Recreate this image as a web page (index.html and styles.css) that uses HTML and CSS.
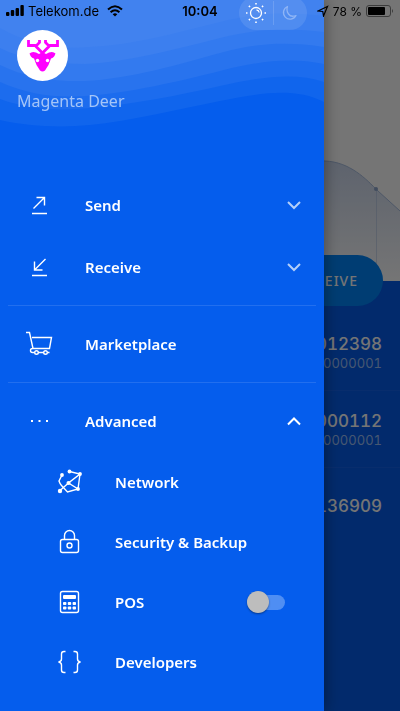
FILE: index.html
```html
<!DOCTYPE html>
<html lang="en">
<head>
<meta charset="utf-8">
<meta name="viewport" content="width=device-width, initial-scale=1">
<title>Menu</title>
<link rel="stylesheet" href="styles.css">
</head>
<body>
<main class="home" aria-hidden="true">
  <div class="chart">
    <svg viewBox="0 0 400 281" preserveAspectRatio="xMaxYMax slice">
      <defs><linearGradient id="fade" x1="0" y1="0" x2="0" y2="1"><stop offset="0" stop-color="#ccd8ee"/><stop offset="1" stop-color="#fff"/></linearGradient></defs>
      <path d="M240 190C280 165 310 160 325 161C350 162 366 179 378 191L400 211V281H240Z" fill="url(#fade)"/>
      <path d="M240 190C280 165 310 160 325 161C350 162 366 179 378 191L400 211" fill="none" stroke="#a9bedf"/>
      <path d="M376.500 189V281" stroke="#a9bedf" stroke-opacity=".5"/>
      <circle cx="376" cy="189" r="2" fill="#8fa6cc"/>
    </svg>
  </div>
  <div class="ledger">
    <button class="receive" type="button" tabindex="-1">RECEIVE</button>
    <ul class="payments">
      <li><strong>0.00012398</strong><span>0.00000001</span></li>
      <li><strong>0.00000112</strong><span>0.00000001</span></li>
      <li><strong>0.00136909</strong></li>
    </ul>
  </div>
</main>
<div class="scrim"></div>

<aside class="drawer">
  <header class="profile">
    <svg class="waves" viewBox="0 0 324 140" preserveAspectRatio="none">
      <rect width="324" height="140" fill="#4182ef"/>
      <path fill="#3c7fef" d="M0 28C28 44 60 50 90 47C135 45 180 32 220 22S290 12 324 16V140H0Z"/>
      <path fill="#337aef" d="M0 48C24 60 55 64 85 64C130 62 180 48 220 38S290 28 324 32V140H0Z"/>
      <path fill="#2873ee" d="M0 65C24 77 55 82 85 81C130 79 180 64 220 53S290 42 324 47V140H0Z"/>
      <path fill="#1c6cee" d="M0 82C30 95 55 98 85 96C130 93 180 81 220 71S290 57 324 64V140H0Z"/>
      <path fill="#1065ed" d="M0 99C30 110 60 111 90 108C130 105 180 95 220 86S295 72 324 82V140H0Z"/>
      <path fill="#055ded" d="M0 120C25 126 60 128 90 125C130 121 180 109 220 101S295 87 324 102V140H0Z"/>
    </svg>
    <div class="identity">
      <svg class="avatar" viewBox="0 0 51 51" role="img" aria-label="Magenta deer avatar">
        <circle cx="25.500" cy="25.500" r="25.500" fill="#fff"/>
        <path d="M11.500 10V15.500H18L25.500 23L33 15.500H40.500V10M22.500 10V12.500L19 16M28.500 10V12.500L32 16" fill="none" stroke="#f0f" stroke-width="2.800"/>
        <path d="M25.500 22L29 24L32 22.500Q36 21 38.500 23.500Q37 28 34 28.500L31.500 35L28 40.500Q25.500 42.500 23 40.500L19.500 35L17 28.500Q14 28 12.500 23.500Q15 21 19 22.500L22 24Z" fill="#f0f"/>
        <circle cx="20.500" cy="30.500" r="1.700" fill="#fff"/><circle cx="30.500" cy="30.500" r="1.700" fill="#fff"/>
      </svg>
      <span class="name">Magenta Deer</span>
    </div>
    <div class="theme">
      <button type="button" aria-label="Light theme">
        <svg width="24" height="24" viewBox="0 0 24 24" fill="none" stroke="#fff"><circle cx="12" cy="12" r="5.500" stroke-width="1.300"/><path d="M12.500 8.800A3.200 3.200 0 0 1 15.200 11.500" stroke-width="1.200"/><path d="M12 2V3.500M12 20.500V22M2 12H3.500M20.500 12H22M4.900 4.900L6 6M18 18L19.100 19.100M4.900 19.100L6 18M18 6L19.100 4.900" stroke-width="1.600"/></svg>
      </button>
      <button class="night" type="button" aria-label="Dark theme">
        <svg width="24" height="24" viewBox="0 0 24 24" fill="none" stroke="#a3c2f7" stroke-opacity=".75" stroke-width="1.300"><path d="M9.500 5.500A6.600 6.600 0 1 0 18 14.500Q13 16.500 10.500 13T9.500 5.500Z" stroke-linejoin="round"/></svg>
      </button>
    </div>
  </header>

  <nav class="menu">
    <button class="row" type="button" aria-expanded="false">
      <svg class="icon" viewBox="0 0 28 28"><path d="M7.500 17.500L18.500 6.500M10.500 6.500H18.500V14.500M6 22.500H21"/></svg>
      <span>Send</span>
      <svg class="chevron" viewBox="0 0 14 14"><path d="M1 4L7 10L13 4"/></svg>
    </button>
    <button class="row" type="button" aria-expanded="false">
      <svg class="icon" viewBox="0 0 28 28"><path d="M19.500 6L8.500 17M8.500 8.500V17H16.500M6 22.500H21"/></svg>
      <span>Receive</span>
      <svg class="chevron" viewBox="0 0 14 14"><path d="M1 4L7 10L13 4"/></svg>
    </button>
    <hr>
    <a class="row" href="#marketplace">
      <svg class="icon" viewBox="0 0 28 28"><path d="M0 2.500H3.500L7 18.500H23.500L25.500 7.500H6M6.500 18.500Q4.500 18.500 4.500 20.500T6.500 22.500H8.500M12 22.500H18M21.500 22.500H23.500"/><circle cx="10.500" cy="22.500" r="1.800"/><circle cx="19.500" cy="22.500" r="1.800"/></svg>
      <span>Marketplace</span>
    </a>
    <hr>
    <button class="row open" type="button" aria-expanded="true">
      <svg class="icon" viewBox="0 0 28 28"><path d="M5 14H7M12.500 14H14.500M20 14H22" stroke-width="1.800"/></svg>
      <span>Advanced</span>
      <svg class="chevron" viewBox="0 0 14 14"><path d="M1 10.500L7 4.500L13 10.500"/></svg>
    </button>
    <div class="sub">
      <a class="row" href="#network">
        <svg class="icon" viewBox="0 0 28 28"><path d="M6 7L3 13Q4 16 5.500 17.500L11.500 24L22 21L12.500 15L24 6L13.500 3.500M24 6L22 21M12.500 15L4 22.500"/><g fill="#fff" stroke="none"><circle cx="6" cy="7" r="1.900"/><circle cx="13.500" cy="3.500" r="1.900"/><circle cx="24" cy="6" r="1.900"/><circle cx="12.500" cy="15" r="2"/><circle cx="22" cy="21" r="1.900"/><circle cx="4" cy="23" r="2.200"/></g></svg>
        <span>Network</span>
      </a>
      <a class="row" href="#security">
        <svg class="icon" viewBox="0 0 28 28"><rect x="4.500" y="11.500" width="18" height="13" rx="2"/><path d="M8.500 11.500V7.500A5 5 0 0 1 18.500 7.500V11.500"/><circle cx="13.500" cy="17.500" r="2.500"/></svg>
        <span>Security &amp; Backup</span>
      </a>
      <label class="row">
        <svg class="icon" viewBox="0 0 28 28"><rect x="4.500" y="3.500" width="18" height="21" rx="2"/><g fill="#fff" stroke="none"><rect x="7" y="7" width="13" height="4" rx="1"/><rect x="7" y="14" width="3.400" height="3" rx=".8"/><rect x="11.800" y="14" width="3.400" height="3" rx=".8"/><rect x="16.600" y="14" width="3.400" height="3" rx=".8"/><rect x="7" y="18.500" width="3.400" height="3" rx=".8"/><rect x="11.800" y="18.500" width="3.400" height="3" rx=".8"/><rect x="16.600" y="18.500" width="3.400" height="3" rx=".8"/></g></svg>
        <span>POS</span>
        <input class="switch" type="checkbox">
      </label>
      <a class="row" href="#developers">
        <svg class="icon" viewBox="0 0 28 28"><path d="M9.500 3.500H8Q5.500 3.500 5.500 6V11Q5.500 13.500 2.500 14Q5.500 14.500 5.500 17V22Q5.500 24.500 8 24.500H9.500M17.500 3.500H19Q21.500 3.500 21.500 6V11Q21.500 13.500 24.500 14Q21.500 14.500 21.500 17V22Q21.500 24.500 19 24.500H17.500"/></svg>
        <span>Developers</span>
      </a>
    </div>
  </nav>
</aside>

<div class="status">
  <div class="carrier">
    <svg width="18" height="12" viewBox="0 0 18 12"><rect y="7" width="3.400" height="4" rx="1"/><rect x="4.800" y="5" width="3.400" height="6" rx="1"/><rect x="9.600" y="3" width="3.400" height="8" rx="1"/><rect x="14.400" width="3.400" height="11" rx="1"/></svg>
    <span>Telekom.de</span>
    <svg class="wifi" width="16" height="12" viewBox="0 0 16 12" fill="none" stroke="#000" stroke-width="2"><path d="M1 4.500Q8-2 15 4.500M3.600 7.300Q8 3.300 12.400 7.300"/><path d="M8 11.500L5.700 9.200Q8 7.200 10.300 9.200Z" fill="#000" stroke="none"/></svg>
  </div>
  <time>10:04</time>
  <div class="power">
    <svg width="12" height="12" viewBox="0 0 12 12" fill="none" stroke="#000" stroke-width="1.200"><path d="M1 6L10.500 1.500L6.500 11L5.800 6.500Z"/></svg>
    <span>78 %</span>
    <svg width="28" height="12" viewBox="0 0 28 12"><rect x=".5" y=".5" width="24" height="11" rx="2.500" fill="none" stroke="#3c3c3c"/><rect x="2" y="2" width="17" height="8" rx="1"/><path d="M26 4Q28 6 26 8Z" fill="#3c3c3c"/></svg>
  </div>
</div>
</body>
</html>
```
FILE: styles.css
```css
* { box-sizing: border-box; }

body {
  margin: 0;
  min-height: 100vh;
  overflow: hidden;
  background: #055deb;
  color: #fff;
  font-family: "Noto Sans", "Open Sans", sans-serif;
}

button {
  padding: 0;
  border: 0;
  background: none;
  color: inherit;
  font: inherit;
}

.home {
  display: flex;
  flex-direction: column;
  min-height: 100vh;
}

.chart { background: #fff; }

.chart svg {
  display: block;
  width: 100%;
  height: 281px;
}

.ledger {
  flex: 1;
  display: flex;
  flex-direction: column;
  background: #055deb;
}

.receive {
  align-self: flex-end;
  width: 168px;
  height: 51px;
  margin: -26px 17px 8px 0;
  padding-right: 25px;
  border-radius: 26px;
  background: #0085fb;
  font-size: 14px;
  font-weight: 500;
  letter-spacing: 1px;
  text-align: right;
}

.payments {
  margin: 0;
  padding: 0;
  list-style: none;
  font-family: Inter, Roboto, sans-serif;
  font-variant-numeric: tabular-nums;
}

.payments li {
  display: flex;
  flex-direction: column;
  justify-content: center;
  height: 77px;
  padding-right: 18px;
  border-bottom: 1px solid #1362ed;
  text-align: right;
}

.payments li:last-child { border: 0; }

.payments strong {
  font-size: 17px;
  font-weight: 500;
  line-height: 21px;
}

.payments span {
  color: #9bbef7;
  font-size: 13px;
  line-height: 16px;
}

.scrim {
  position: fixed;
  inset: 0;
  background: rgba(0, 0, 0, 0.54);
}

.drawer {
  position: fixed;
  inset: 0 auto 0 0;
  width: 81%;
  overflow: hidden;
  background: #055ded;
  box-shadow: 0 0 16px rgba(0, 0, 0, 0.4);
}

.profile {
  position: relative;
  display: flex;
  justify-content: space-between;
  align-items: flex-start;
  height: 174px;
  padding: 0 17px;
}

.waves {
  position: absolute;
  inset: 0 0 auto 0;
  width: 100%;
  height: 140px;
}

.identity {
  position: relative;
  display: flex;
  flex-direction: column;
  gap: 8px;
  padding-top: 30px;
}

.avatar {
  width: 51px;
  height: 51px;
}

.name {
  color: #a4c5f8;
  font-size: 16px;
  line-height: 24px;
}

.theme {
  position: relative;
  display: flex;
  align-items: center;
  width: 68px;
  height: 34px;
  margin-top: -4px;
  border-radius: 17px;
  background: rgba(255, 255, 255, 0.1);
}

.theme button {
  flex: 1;
  display: flex;
  justify-content: center;
}

.theme .night { border-left: 1px solid rgba(255, 255, 255, 0.15); }

.row {
  display: flex;
  align-items: center;
  width: 100%;
  height: 62px;
  padding: 0 23px 0 26px;
  color: #fff;
  font-size: 15px;
  font-weight: 600;
  line-height: 20px;
  text-align: left;
  text-decoration: none;
}

.row span { flex: 1; }

.icon {
  width: 28px;
  height: 28px;
  margin-right: 31px;
  fill: none;
  stroke: #fff;
  stroke-width: 1.4;
}

.chevron {
  width: 14px;
  height: 14px;
  fill: none;
  stroke: #b4cff9;
  stroke-width: 2;
}

.open .chevron { stroke: #fff; }

hr {
  height: 1px;
  margin: 7px 8px;
  border: 0;
  background: #226fef;
}

.sub .row {
  height: 60px;
  padding: 0 39px 0 56px;
}

.switch {
  appearance: none;
  display: flex;
  align-items: center;
  width: 38px;
  height: 15px;
  margin: 0;
  border-radius: 8px;
  background: #4f8ef3;
}

.switch::before {
  content: "";
  width: 22px;
  height: 22px;
  flex: none;
  border-radius: 50%;
  background: #bdbdbd;
  box-shadow: 0 1px 2px rgba(0, 0, 0, 0.4);
}

.status {
  position: fixed;
  inset: 0 0 auto 0;
  display: grid;
  grid-template-columns: 1fr auto 1fr;
  align-items: center;
  height: 22px;
  padding: 0 6px;
  color: #000;
  font-family: Inter, Roboto, sans-serif;
  font-size: 12px;
}

.carrier,
.power {
  display: flex;
  align-items: center;
  gap: 4px;
}

.carrier span { font-size: 13px; }

.wifi { margin-left: 4px; }

.power { justify-content: flex-end; }

time {
  font-size: 13px;
  font-weight: 600;
}
```
